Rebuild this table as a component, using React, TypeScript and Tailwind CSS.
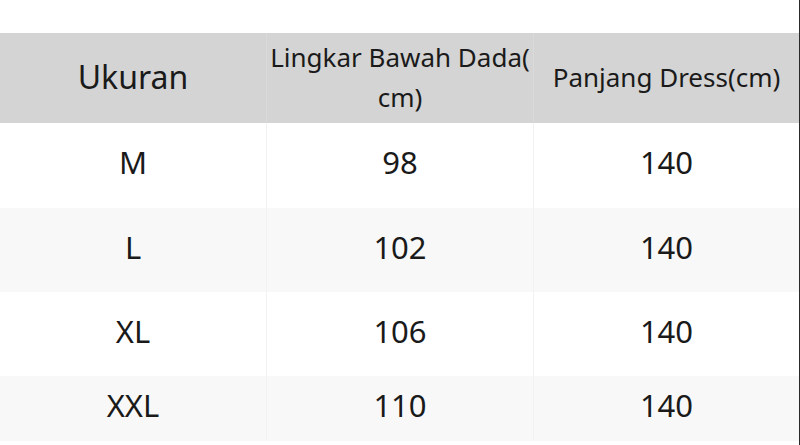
import React from "react";

const rows = [
  { size: "M", a: "98", b: "140", bg: "bg-white", h: "h-[85px]" },
  { size: "L", a: "102", b: "140", bg: "bg-[#f8f8f8]", h: "h-[84px]" },
  { size: "XL", a: "106", b: "140", bg: "bg-white", h: "h-[84px]" },
  { size: "XXL", a: "110", b: "140", bg: "bg-[#f8f8f8]", h: "h-[65px]" },
];

export default function App() {
  return (
    <div
      className="w-[800px] h-[445px] bg-white text-[#1a1a1a] overflow-hidden border-r border-[#2a2a2a]"
      style={{ fontFamily: '"Noto Sans", "Open Sans", sans-serif' }}
    >
      <div className="h-[33px]" />
      <div className="grid grid-cols-[266px_267px_266px] h-[90px] bg-[#d4d4d4]">
        <div className="flex items-center justify-center text-[32px] pb-[2px]">Ukuran</div>
        <div className="flex items-center justify-center text-center text-[26px] leading-[40px] border-l border-[#dadada] pb-[2px]">
          <span>
            Lingkar Bawah Dada(
            <br />
            cm)
          </span>
        </div>
        <div className="flex items-center justify-center text-[26px] border-l border-[#dadada] pb-[2px]">
          Panjang Dress(cm)
        </div>
      </div>
      {rows.map((r) => (
        <div key={r.size} className={`grid grid-cols-[266px_267px_266px] ${r.h} ${r.bg} text-[31px]`}>
          <div className="flex items-center justify-center pb-[6px]">{r.size}</div>
          <div className="flex items-center justify-center border-l border-[#f2f2f2] pb-[6px]">{r.a}</div>
          <div className="flex items-center justify-center border-l border-[#f2f2f2] pb-[6px]">{r.b}</div>
        </div>
      ))}
    </div>
  );
}
